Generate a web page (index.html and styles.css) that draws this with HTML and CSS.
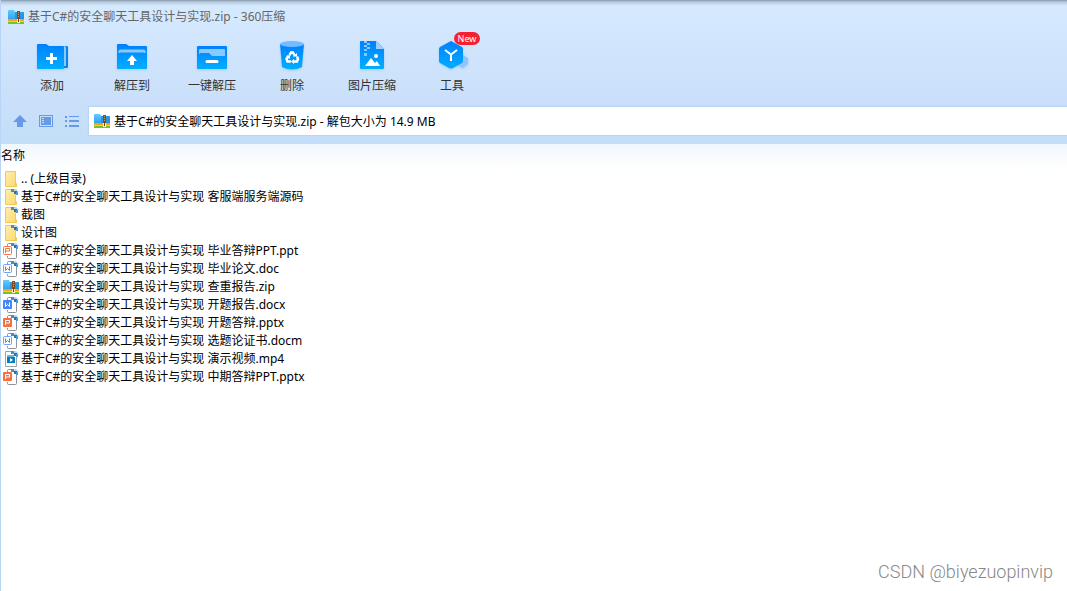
FILE: index.html
```html
<!DOCTYPE html>
<html lang="zh-CN">
<head>
<meta charset="utf-8">
<meta name="viewport" content="width=device-width, initial-scale=1">
<title>基于C#的安全聊天工具设计与实现.zip - 360压缩</title>
<link rel="stylesheet" href="styles.css">
</head>
<body>
<svg class="defs" aria-hidden="true">
  <defs>
    <linearGradient id="blue" x1="0" y1="0" x2="0" y2="1"><stop offset="0" stop-color="#0080ff"/><stop offset="1" stop-color="#00aeff"/></linearGradient>
    <linearGradient id="sky" x1="0" y1="0" x2="0" y2="1"><stop offset="0" stop-color="#62ccfc"/><stop offset="1" stop-color="#2b9df0"/></linearGradient>
    <linearGradient id="gold" x1="0" y1="0" x2="1" y2="1"><stop offset="0" stop-color="#ffeeb0"/><stop offset="1" stop-color="#fbd96a"/></linearGradient>
    <symbol id="zip" viewBox="0 0 16 16">
      <path d="M0 2q0-1 1-1h5l1 2h9v8H0z" fill="url(#sky)"/>
      <path d="M7 3h9v7H7z" fill="#1583d4" opacity=".6"/>
      <path d="M0 10h16v2H0z" fill="#ff9d13"/>
      <path d="M0 12h16v1H0z" fill="#f4d531"/>
      <path d="M0 13h16v2H0z" fill="#6cc62c"/>
      <path d="M9 2h3v9H9z" fill="#8b4c1d"/>
      <path d="M10 3h1v1h-1zM10 5h1v1h-1zM10 7h1v1h-1z" fill="#c98e4f"/>
      <path d="M9 10h3v4H9z" fill="#fff0b5"/>
      <path d="M10 9h1v4h-1z" fill="#70401b"/>
    </symbol>
    <symbol id="folder" viewBox="0 0 16 16">
      <path d="M2.500.5h10v11.500l1 1v2.500h-11z" fill="url(#gold)" stroke="#efca58"/>
      <path d="M12.500 11.500v3.500" stroke="#efca58"/>
    </symbol>
    <symbol id="mark" viewBox="0 0 16 16">
      <path d="M8 0h3v3H8z" fill="#3f8fd0"/><path d="M11 0h2l3 3h-3z" fill="#a9d4f2"/><path d="M11 2h3v3h-3z" fill="#2474b5"/><path d="M13 3h2v3h-2z" fill="#4a9bd9"/>
    </symbol>
    <symbol id="folder-mark" viewBox="0 0 16 16"><use href="#folder"/><use href="#mark"/></symbol>
    <symbol id="page" viewBox="0 0 16 16">
      <path d="M4.500 4V1.500a1 1 0 0 1 1-1H10L13.500 4v10.500a1 1 0 0 1-1 1h-7a1 1 0 0 1-1-1V13" fill="#fff" stroke="#8e9298"/><use href="#mark"/>
    </symbol>
    <symbol id="ppt" viewBox="0 0 16 16"><use href="#page"/><rect x=".5" y="3.500" width="8" height="8" rx="1" fill="#fff" stroke="#f47143"/><path d="M2.500 10V5.500h4v2.500h-4" fill="none" stroke="#f47143"/></symbol>
    <symbol id="pptx" viewBox="0 0 16 16"><use href="#page"/><rect y="3" width="9" height="9" rx="1" fill="#f47143"/><path d="M2.500 10V5.500h4v2.500h-4" fill="none" stroke="#fff"/></symbol>
    <symbol id="doc" viewBox="0 0 16 16"><use href="#page"/><rect x=".5" y="3.500" width="8" height="8" rx="1" fill="#fff" stroke="#6ea2f7"/><path d="M2.500 5.500v4l2-2 2 2v-4" fill="none" stroke="#4d86ed"/></symbol>
    <symbol id="docx" viewBox="0 0 16 16"><use href="#page"/><rect y="3" width="9" height="9" rx="1" fill="#4588f5"/><path d="M2.500 5.500v4l2-2 2 2v-4" fill="none" stroke="#fff"/></symbol>
    <symbol id="video" viewBox="0 0 16 16"><path d="M2.500.5H10L13.500 4v11.500h-11z" fill="#fff" stroke="#9ba5ad"/><path d="M4 4h7v2H4z" fill="#55bde7"/><path d="M4 6h8v6H4z" fill="#087dbb"/><path d="M7 7v4l3-2z" fill="#fff"/><use href="#mark"/></symbol>
  </defs>
</svg>

<div class="window">
  <header class="chrome">
    <div class="titlebar">
      <svg class="icon" aria-hidden="true"><use href="#zip"/></svg>
      <h1 class="title">基于C#的安全聊天工具设计与实现.zip - 360压缩</h1>
    </div>

    <div class="toolbar">
      <button class="tool" type="button">
        <svg class="tool-icon" viewBox="0 0 32 32" aria-hidden="true">
          <path d="M26 6h5q1 0 1 1v20q0 1-1 1h-5z" fill="#0784ee"/><path d="M26 6h2q2 0 2 2v18h-4z" fill="#8bc8ff"/>
          <path d="M1 5q0-1 1-1h8l3 2h14q1 0 1 1v21q0 1-1 1H2q-1 0-1-1z" fill="url(#blue)"/>
          <path d="M15.500 13v11M10 18.500h11" stroke="#fff" stroke-width="3"/>
        </svg>
        <span>添加</span>
      </button>
      <button class="tool" type="button">
        <svg class="tool-icon" viewBox="0 0 32 32" aria-hidden="true">
          <path d="M1 5q0-1 1-1h8l3 2h17q1 0 1 1v21q0 1-1 1H2q-1 0-1-1z" fill="url(#blue)"/>
          <path d="M3 13v-2q0-1 1-1h24q1 0 1 1v2q0-1-1-1H4q-1 0-1 1z" fill="#8bc8ff" stroke="#8bc8ff"/>
          <path d="M16 15l5 6h-3v4h-4v-4h-3z" fill="#fff"/>
        </svg>
        <span>解压到</span>
      </button>
      <button class="tool" type="button">
        <svg class="tool-icon" viewBox="0 0 32 32" aria-hidden="true">
          <rect x="1" y="6" width="30" height="23" rx="1" fill="url(#blue)"/>
          <path d="M3 12v-2q0-1 1-1h24q1 0 1 1v6H16l-3-3H5q-2 0-2 2z" fill="#8bc8ff"/>
          <path d="M11 21.500h10" stroke="#fff" stroke-width="3" stroke-linecap="round"/>
        </svg>
        <span>一键解压</span>
      </button>
      <button class="tool" type="button">
        <svg class="tool-icon" viewBox="0 0 32 32" aria-hidden="true">
          <path d="M4 4h24l-2 23q-10 5-20 0z" fill="url(#blue)"/><ellipse cx="16" cy="4" rx="12" ry="3" fill="#73bcff"/>
          <g fill="none" stroke="#fff" stroke-width="2.500"><path d="M13.500 15l1.500-2.500h2l2 3.500"/><path d="M21 16.500l1 2.500-1 2.500h-4"/><path d="M15 21.500h-3.500L10.500 19l2-3"/></g>
          <path d="M17 16.500h4V13zM18 19v5l-3-2.500zM10 16l4-1v4z" fill="#fff"/>
        </svg>
        <span>删除</span>
      </button>
      <button class="tool" type="button">
        <svg class="tool-icon" viewBox="0 0 32 32" aria-hidden="true">
          <path d="M5 1h15l8 8v19q0 1-1 1H5q-1 0-1-1V2q0-1 1-1z" fill="url(#blue)"/><path d="M20 1l8 8h-8z" fill="#9bd0ff"/>
          <path d="M8 1h3v2H8zM11 3h3v2h-3zM8 5h3v2H8zM11 7h3v2h-3zM8 9h3v2H8zM8 13h3v3H8z" fill="#8cc8ff"/>
          <circle cx="20" cy="16" r="2" fill="#fff"/><path d="M9 26l6-8 4 5 2-2 3 5z" fill="#fff"/>
        </svg>
        <span>图片压缩</span>
      </button>
      <button class="tool" type="button">
        <svg class="tool-icon" viewBox="0 0 32 32" aria-hidden="true">
          <path d="M27 15l5 3v6l-5 4-6-3z" fill="#8cc6ff"/>
          <path d="M15 1l11 6q1 1 1 2v12q0 1-1 2l-9 5q-2 1-4 0l-9-5q-1-1-1-2V9q0-1 1-2z" fill="url(#blue)"/>
          <path d="M9 10l6 4.500 6-4.500M15 14.500V21" fill="none" stroke="#fff" stroke-width="2"/>
        </svg>
        <span>工具</span>
        <span class="badge">New</span>
      </button>
    </div>

    <div class="addressbar">
      <nav class="nav">
        <button class="nav-button" type="button" aria-label="上级目录"><svg class="icon" viewBox="0 0 16 16" aria-hidden="true"><path d="M8 2l7 7h-4v5H5V9H1z"/></svg></button>
        <button class="nav-button" type="button" aria-label="预览"><svg class="icon" viewBox="0 0 16 16" aria-hidden="true"><path d="M1 2h14v12H1zM2 3v10h12V3zM3 4h10v8H3z" fill-rule="evenodd"/><path d="M4 5h2v1H4zM4 7h2v1H4zM4 9h2v1H4z" fill="#c7dff9"/></svg></button>
        <button class="nav-button" type="button" aria-label="列表"><svg class="icon" viewBox="0 0 16 16" aria-hidden="true"><path d="M1 3h2v2H1zM1 7h2v2H1zM1 12h2v2H1zM5 3h10v1H5zM5 7h10v2H5zM5 12h10v2H5z"/></svg></button>
      </nav>
      <label class="address">
        <svg class="icon" aria-hidden="true"><use href="#zip"/></svg>
        <input class="address-input" type="text" aria-label="地址" value="基于C#的安全聊天工具设计与实现.zip - 解包大小为 14.9 MB">
      </label>
    </div>
  </header>

  <main class="files">
    <table class="file-table">
      <thead><tr><th scope="col">名称</th></tr></thead>
      <tbody>
        <tr><td><div class="file"><svg class="icon" aria-hidden="true"><use href="#folder"/></svg>.. (上级目录)</div></td></tr>
        <tr><td><div class="file"><svg class="icon" aria-hidden="true"><use href="#folder-mark"/></svg>基于C#的安全聊天工具设计与实现 客服端服务端源码</div></td></tr>
        <tr><td><div class="file"><svg class="icon" aria-hidden="true"><use href="#folder-mark"/></svg>截图</div></td></tr>
        <tr><td><div class="file"><svg class="icon" aria-hidden="true"><use href="#folder-mark"/></svg>设计图</div></td></tr>
        <tr><td><div class="file"><svg class="icon" aria-hidden="true"><use href="#ppt"/></svg>基于C#的安全聊天工具设计与实现 毕业答辩PPT.ppt</div></td></tr>
        <tr><td><div class="file"><svg class="icon" aria-hidden="true"><use href="#doc"/></svg>基于C#的安全聊天工具设计与实现 毕业论文.doc</div></td></tr>
        <tr><td><div class="file"><svg class="icon" aria-hidden="true"><use href="#zip"/></svg>基于C#的安全聊天工具设计与实现 查重报告.zip</div></td></tr>
        <tr><td><div class="file"><svg class="icon" aria-hidden="true"><use href="#docx"/></svg>基于C#的安全聊天工具设计与实现 开题报告.docx</div></td></tr>
        <tr><td><div class="file"><svg class="icon" aria-hidden="true"><use href="#pptx"/></svg>基于C#的安全聊天工具设计与实现 开题答辩.pptx</div></td></tr>
        <tr><td><div class="file"><svg class="icon" aria-hidden="true"><use href="#doc"/></svg>基于C#的安全聊天工具设计与实现 选题论证书.docm</div></td></tr>
        <tr><td><div class="file"><svg class="icon" aria-hidden="true"><use href="#video"/></svg>基于C#的安全聊天工具设计与实现 演示视频.mp4</div></td></tr>
        <tr><td><div class="file"><svg class="icon" aria-hidden="true"><use href="#pptx"/></svg>基于C#的安全聊天工具设计与实现 中期答辩PPT.pptx</div></td></tr>
      </tbody>
    </table>
  </main>
  <footer class="watermark">CSDN @biyezuopinvip</footer>
</div>
</body>
</html>
```

FILE: styles.css
```css
* {
  box-sizing: border-box;
}

body {
  margin: 0;
  font: 12px/18px "Noto Sans", "Noto Sans CJK SC", sans-serif;
  color: #000;
  background: #fff;
}

button,
input {
  margin: 0;
  padding: 0;
  border: 0;
  background: none;
  font: inherit;
  color: inherit;
}

.defs {
  position: absolute;
  width: 0;
  height: 0;
}

.window {
  display: flex;
  flex-direction: column;
  min-height: 100vh;
  border-left: 1px solid #b9d5f6;
}

.icon {
  flex: none;
  display: block;
  width: 16px;
  height: 16px;
}

.chrome {
  padding-bottom: 9px;
  background:
    linear-gradient(#8397ab, #b8cadc 2px, #d5e9fe00 6px),
    linear-gradient(#d6eaff, #cae0fa 70%, #c3def8);
}

.titlebar {
  display: flex;
  align-items: center;
  gap: 4px;
  height: 33px;
  padding-left: 7px;
}

.title {
  margin: 0;
  font-size: 12px;
  font-weight: 400;
  color: #666;
}

.toolbar {
  display: flex;
  height: 74px;
  padding: 7px 0 0 11px;
}

.tool {
  position: relative;
  display: flex;
  flex-direction: column;
  align-items: center;
  gap: 5px;
  width: 80px;
  height: 60px;
  color: #333;
}

.tool-icon {
  flex: none;
  width: 32px;
  height: 32px;
  overflow: visible;
  filter: drop-shadow(0 1px 1px #72b9ff80);
}

.badge {
  position: absolute;
  top: -8px;
  left: 42px;
  width: 26px;
  height: 13px;
  border-radius: 7px;
  background: #f8202e;
  font-size: 9px;
  line-height: 13px;
  color: #fff;
}

.addressbar {
  display: flex;
  height: 28px;
}

.nav {
  display: flex;
  align-items: center;
  gap: 10px;
  padding: 0 9px 0 11px;
}

.nav-button {
  width: 16px;
  height: 16px;
  fill: #6699e8;
}

.address {
  flex: 1;
  display: flex;
  align-items: center;
  gap: 4px;
  padding-left: 5px;
  background: #fff;
  box-shadow: 0 0 1px 1px #b9d5f3;
}

.address-input {
  flex: 1;
  min-width: 0;
  padding-top: 2px;
  outline: 0;
}

.files {
  flex: 1;
}

.file-table {
  width: 100%;
  border-collapse: collapse;
}

.file-table th {
  height: 26px;
  padding: 0 0 2px;
  background: linear-gradient(#f1f7fe, #fff);
  font-weight: 400;
  text-align: left;
}

.file-table td {
  padding: 0;
}

.file {
  display: flex;
  align-items: center;
  gap: 2px;
  height: 18px;
  padding-left: 2px;
  white-space: nowrap;
}

.watermark {
  padding: 0 14px 8px;
  font: 300 18px/22px Roboto, "Liberation Sans", sans-serif;
  text-align: right;
  color: #888;
}
```
